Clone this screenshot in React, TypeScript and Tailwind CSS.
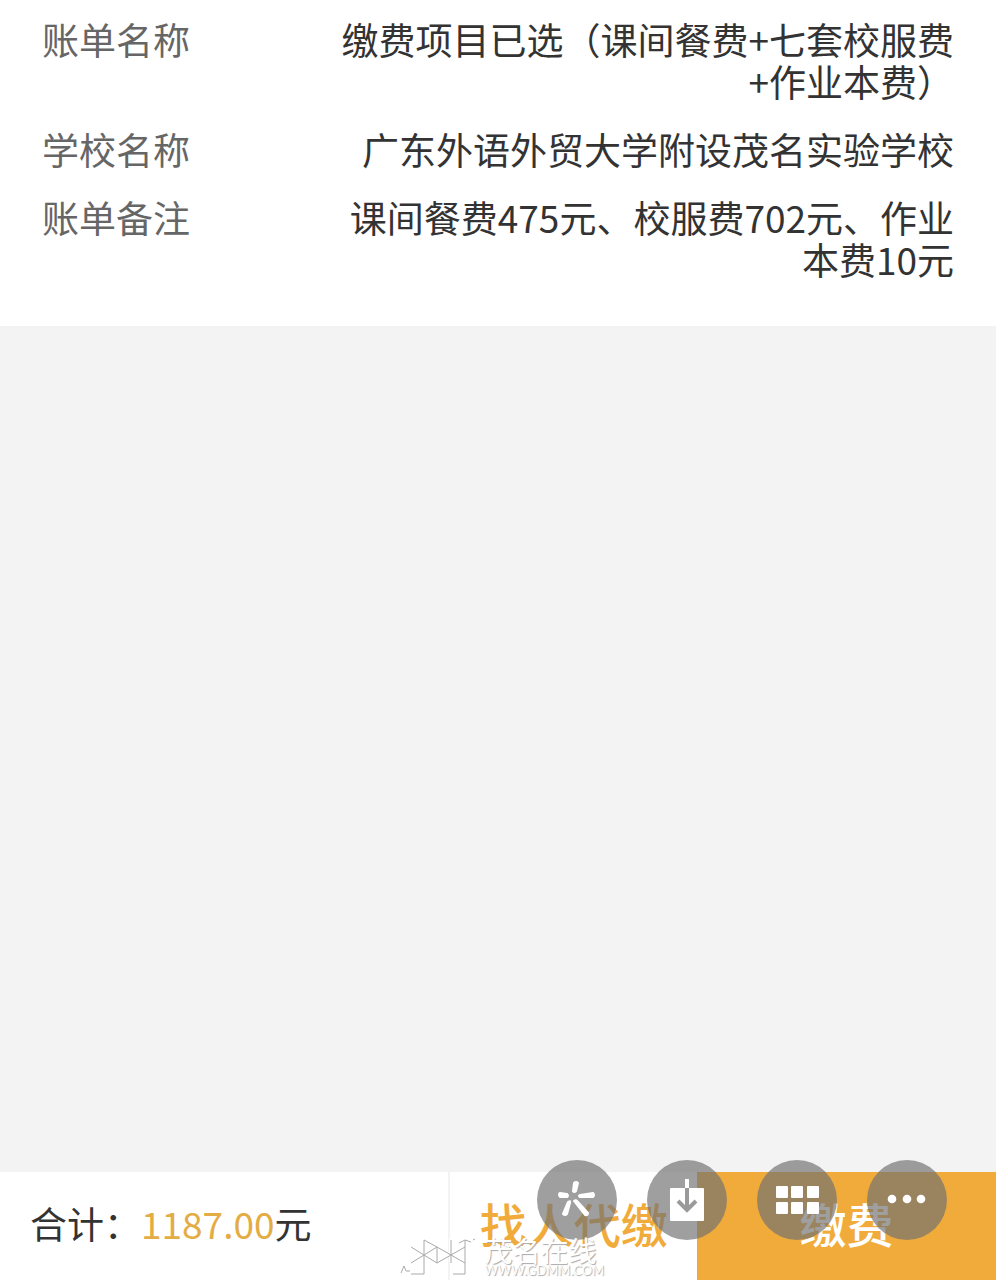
import { type ReactNode } from 'react'

const bill = [
  { label: '账单名称', value: '缴费项目已选（课间餐费+七套校服费+作业本费）' },
  { label: '学校名称', value: '广东外语外贸大学附设茂名实验学校' },
  { label: '账单备注', value: '课间餐费475元、校服费702元、作业本费10元' },
]

const tools: { name: string; icon: ReactNode }[] = [
  {
    name: '智能识图',
    icon: (
      <g fill="#fff" stroke="#fff" strokeWidth="2" strokeLinejoin="round">
        <path d="M36 31 L37 23 Q39 21 41 23 L39 31 Q37 33 36 31Z" />
        <path d="M43 35 L56 33 Q58 35 56 37 L43 37 Q41 36 43 35Z" />
        <path d="M30 34 L23 33 Q21 34 23 37 L30 37 Q32 36 30 34Z" />
        <path d="M31 42 Q34 40 33 43 L30 54 Q28 56 26 54Z" />
        <path d="M37 41 Q39 39 41 42 L51 53 Q51 56 48 55Z" />
      </g>
    ),
  },
  {
    name: '保存图片',
    icon: (
      <>
        <rect x="23" y="28" width="34" height="33" rx="1" fill="#fff" />
        <path d="M40 19 V28" stroke="#fff" strokeWidth="4" fill="none" />
        <path d="M40 28 V50 M31 41 L40 50 L49 41" stroke="#9a9a9a" strokeWidth="4" fill="none" />
      </>
    ),
  },
  {
    name: '查看全部图片',
    icon: (
      <g fill="#fff">
        {[19, 34, 50].map((x) => (
          <g key={x}>
            <rect x={x} y="26" width="12" height="12" rx="1" />
            <rect x={x} y="42" width="12" height="12" rx="1" />
          </g>
        ))}
      </g>
    ),
  },
  {
    name: '更多',
    icon: (
      <g fill="#fff">
        <circle cx="25" cy="39" r="4.3" />
        <circle cx="40" cy="39" r="4.3" />
        <circle cx="54" cy="39" r="4.3" />
      </g>
    ),
  },
]

const markPath =
  'M12 8 L38 24 M12 24 L38 8 M25 1 L38 8 M25 1 V35 H12 M38 8 V24 M38 24 L66 8 M38 8 L66 24 M52 1 V24 M66 1 V35 H54 M2 34 L5 27 L7 32 L11 32 M60 4 L66 1 L72 3 M74 1 L76 0'

function Watermark() {
  return (
    <div className="pointer-events-none absolute bottom-0.5 left-[40%] flex items-end gap-2">
      <svg viewBox="0 0 78 40" className="h-10 w-[78px]" fill="none">
        <path d={markPath} stroke="#fff" strokeWidth="2" />
        <path d={markPath} stroke="#aaa" strokeWidth="1" transform="translate(1 1)" />
      </svg>
      <div className="text-white [text-shadow:1px_1px_1px_#aaa]">
        <p className="text-[28px] leading-6">茂名在线</p>
        <p className="font-['Lato',sans-serif] text-[13px] leading-4">WWW.GDMM.COM</p>
      </div>
    </div>
  )
}

export default function App() {
  return (
    <div className="relative flex min-h-screen flex-col bg-[#f3f3f3] font-['Noto_Sans_CJK_SC',sans-serif] text-[37px] leading-[42px] text-[#333]">
      <dl className="flex flex-col gap-[26px] bg-white px-[42px] pt-[18px] pb-[46px]">
        {bill.map((row) => (
          <div key={row.label} className="flex justify-between">
            <dt className="shrink-0 text-[#666]">{row.label}</dt>
            <dd className="w-[68%] text-right">{row.value}</dd>
          </div>
        ))}
      </dl>

      <main className="flex-1" />

      <footer className="flex h-[108px] bg-white">
        <p className="flex flex-1 items-center pb-1.5 pl-[30px]">
          合计：<span className="text-[#e3ac45]">1187.00</span>元
        </p>
        <button className="w-1/4 border-l-2 border-[#f3f3f3] pb-1.5 text-[47px] font-medium text-[#f0ab3b]">找人代缴</button>
        <button className="w-[30%] bg-[#f0ab3b] pb-1.5 text-[47px] font-medium text-white">缴费</button>
      </footer>

      <div className="absolute right-[49px] bottom-10 flex gap-[30px]">
        {tools.map((t) => (
          <button key={t.name} aria-label={t.name} className="size-20 rounded-full bg-[#727272]/68">
            <svg viewBox="0 0 80 80" className="size-20">
              {t.icon}
            </svg>
          </button>
        ))}
      </div>

      <Watermark />
    </div>
  )
}
